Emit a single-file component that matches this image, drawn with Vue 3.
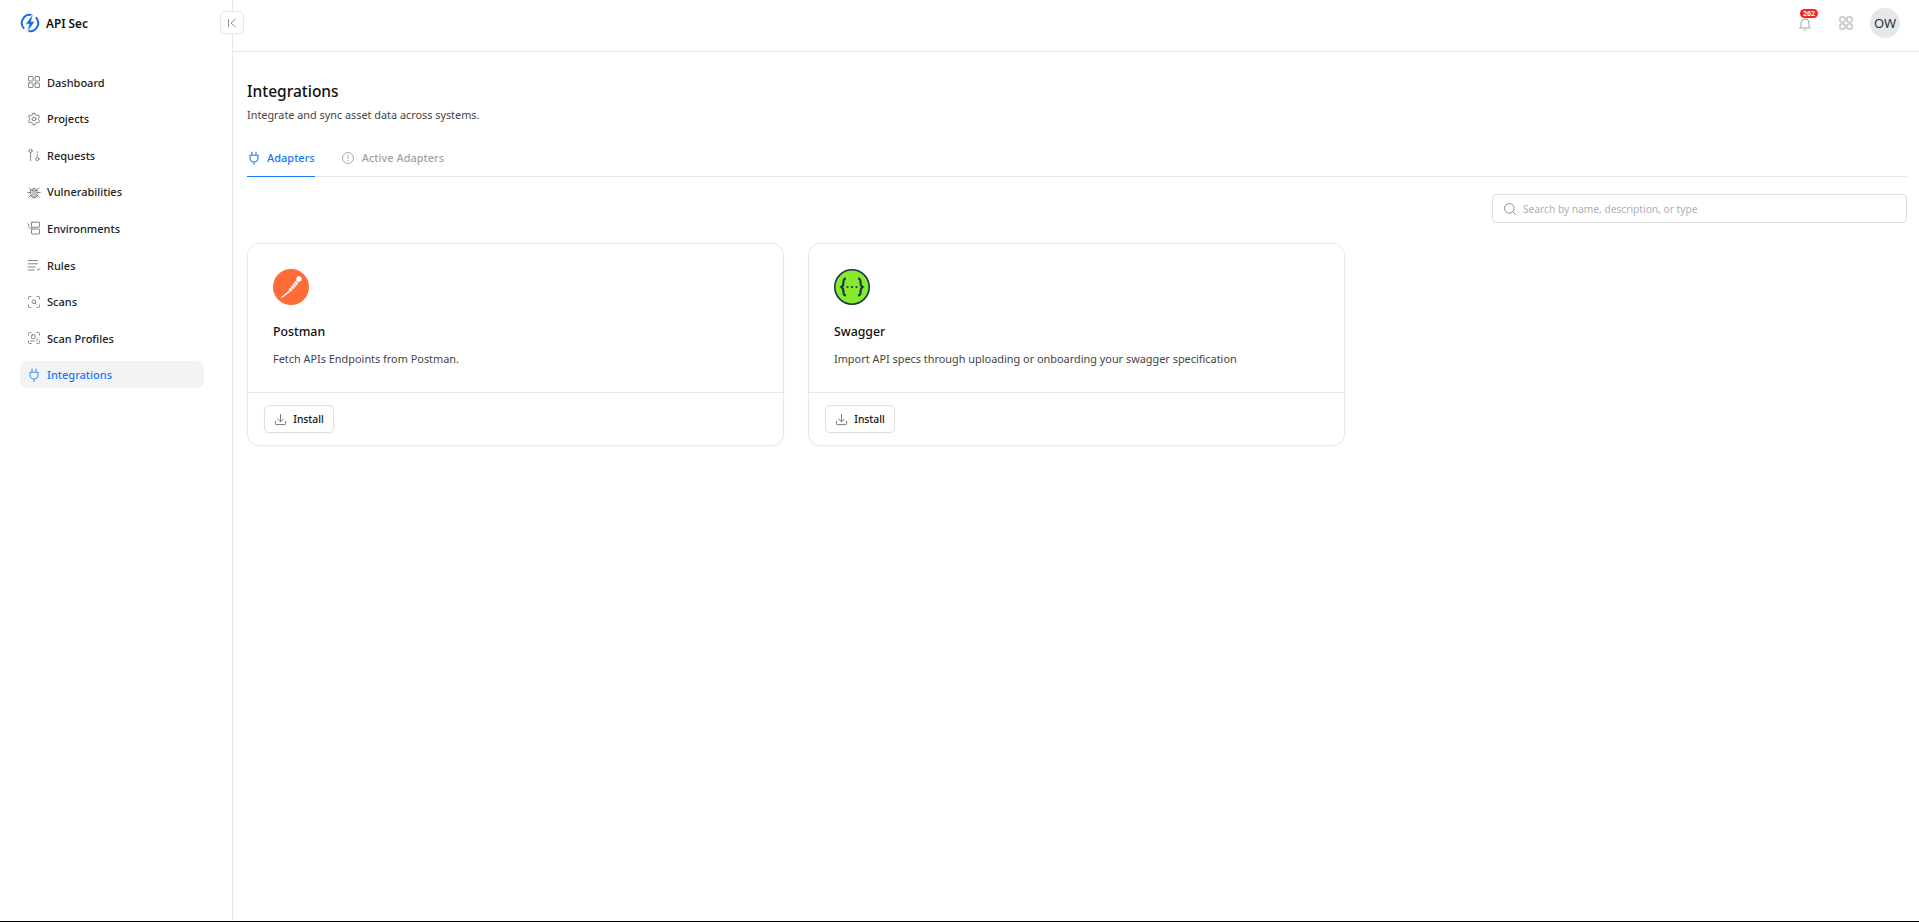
<script setup>
const nav = [
  { label: 'Dashboard', icon: 'grid' },
  { label: 'Projects', icon: 'gear' },
  { label: 'Requests', icon: 'req' },
  { label: 'Vulnerabilities', icon: 'bug' },
  { label: 'Environments', icon: 'env' },
  { label: 'Rules', icon: 'rules' },
  { label: 'Scans', icon: 'scan' },
  { label: 'Scan Profiles', icon: 'profile' },
  { label: 'Integrations', icon: 'plug', active: true }
]
const cards = [
  { name: 'Postman', logo: 'postman', desc: 'Fetch APIs Endpoints from Postman.' },
  { name: 'Swagger', logo: 'swagger', desc: 'Import API specs through uploading or onboarding your swagger specification' }
]
</script>

<template>
  <div class="shell">
    <aside class="side">
      <div class="brand">
        <svg class="brand-logo" viewBox="0 0 20 20" width="20" height="20">
          <path d="M11.500 1.950A8.200 8.200 0 0 0 4.200 15.800M8.500 18.050A8.200 8.200 0 0 0 15.800 4.200" fill="none" stroke="#1a6fe0" stroke-width="2"/>
          <path d="M13.400 .4 5.400 11.200h3.800l-2.400 8.400 8.200-11h-3.800z" fill="#1a6fe0" stroke="#fff" stroke-width=".6"/>
        </svg>
        <span>API Sec</span>
      </div>
      <nav class="nav">
        <a v-for="n in nav" :key="n.label" class="item" :class="{ active: n.active }">
          <svg class="ico" viewBox="0 0 14 14" width="14" height="14" fill="none" stroke="currentColor" stroke-width=".9" stroke-linecap="round" stroke-linejoin="round">
            <template v-if="n.icon === 'grid'">
              <rect x="1.500" y="1.500" width="4.500" height="4.500" rx=".5"/><rect x="8" y="1.500" width="4.500" height="4.500" rx=".5"/>
              <rect x="1.500" y="8" width="4.500" height="4.500" rx=".5"/><rect x="8" y="8" width="4.500" height="4.500" rx=".5"/>
            </template>
            <template v-else-if="n.icon === 'gear'">
              <path d="M6 1.200h2l.5 1.600 1.400.8 1.600-.4 1 1.800-1.100 1.200v1.600l1.100 1.200-1 1.800-1.600-.4-1.400.8-.5 1.600H6l-.5-1.600-1.400-.8-1.600.4-1-1.800 1.100-1.200V6.200L1.500 5l1-1.800 1.600.4 1.400-.8z"/>
              <circle cx="7" cy="7" r="1.900"/>
            </template>
            <template v-else-if="n.icon === 'req'">
              <circle cx="3.600" cy="2.800" r="1.600"/><path d="M3.600 4.400v8.300"/><circle cx="10.300" cy="10.900" r="1.700"/><path d="M10.300 8V6.800M10.300 4.800V3.600"/>
            </template>
            <template v-else-if="n.icon === 'bug'">
              <path d="M3.900 5.200h6.200v4.600a3.100 3.100 0 0 1-6.200 0zM5 5.200a2 2 0 0 1 4 0M6 5.500v7M8 5.500v7M3.900 7.500H.8M10.100 7.500h3.100M4 10 1.500 12.500M10 10l2.500 2.500M4.300 5.300 2 2.800M9.700 5.300 12 2.800"/>
            </template>
            <template v-else-if="n.icon === 'env'">
              <rect x="4.500" y="1.200" width="8" height="5" rx=".5"/><rect x="4.500" y="8" width="8" height="5" rx=".5"/><path d="M.8 2.800 2.300 4.300.8 5.800M2.300 7H4.500"/>
            </template>
            <template v-else-if="n.icon === 'rules'">
              <path d="M1.200 2.500h9.500M1.200 5.800h9.500M1.200 9h7M1.200 12h6M10 11.200l1.200 1.200 1.700-2"/>
            </template>
            <template v-else-if="n.icon === 'scan'">
              <path d="M1.500 4V2.500a1 1 0 0 1 1-1H4M10 1.500h1.500a1 1 0 0 1 1 1V4M12.500 10v1.500a1 1 0 0 1-1 1H10M4 12.500H2.500a1 1 0 0 1-1-1V10"/>
              <circle cx="6.800" cy="6.800" r="1.800"/><path d="M8.200 8.200l1 1"/>
            </template>
            <template v-else-if="n.icon === 'profile'">
              <path d="M1.500 4V2.500a1 1 0 0 1 1-1H4M10 1.500h1.500a1 1 0 0 1 1 1V4M12.500 10v1.500a1 1 0 0 1-1 1H10M4 12.500H2.500a1 1 0 0 1-1-1V10"/>
              <rect x="4.300" y="3.800" width="3.800" height="3.800" rx="1"/><path d="M3.500 10h3.500M10 8v2"/>
            </template>
            <template v-else>
              <path d="M5 1v3M9 1v3M3 4.200h8V7a4 4 0 0 1-8 0zM7 11v2.500" stroke-width="1.100"/>
            </template>
          </svg>
          <span>{{ n.label }}</span>
        </a>
      </nav>
    </aside>
    <div class="collapse">
      <svg viewBox="0 0 12 12" width="12" height="12" fill="none" stroke="#8c8c8c" stroke-width="1">
        <path d="M2.500 2v8M9.500 2 5 6l4.500 4"/>
      </svg>
    </div>
    <div class="main">
      <header class="top">
        <div class="bell">
          <svg viewBox="0 0 14 14" width="14" height="14" fill="none" stroke="#9a9a9a" stroke-width=".9">
            <path d="M3 9.500V6a4 4 0 0 1 8 0v3.500l1.500 1.500h-11zM5.800 13h2.400"/>
          </svg>
          <span class="badge">262</span>
        </div>
        <svg class="apps" viewBox="0 0 14 14" width="14" height="14" fill="none" stroke="#a3a3a3" stroke-width="1">
          <rect x="1" y="1" width="5" height="5" rx=".7"/><rect x="8" y="1" width="5" height="5" rx=".7"/>
          <rect x="1" y="8" width="5" height="5" rx=".7"/><rect x="8" y="8" width="5" height="5" rx=".7"/>
        </svg>
        <div class="avatar">OW</div>
      </header>
      <main class="content">
        <h1>Integrations</h1>
        <p class="sub">Integrate and sync asset data across systems.</p>
        <div class="tabs">
          <div class="tab on">
            <svg viewBox="0 0 14 14" width="14" height="14" fill="none" stroke="currentColor" stroke-width="1.100" stroke-linecap="round">
              <path d="M5 1v3M9 1v3M3 4.200h8V7a4 4 0 0 1-8 0zM7 11v2.500"/>
            </svg>
            <span>Adapters</span>
          </div>
          <div class="tab second">
            <svg viewBox="0 0 14 14" width="14" height="14" fill="none" stroke="currentColor" stroke-width=".9" stroke-linecap="round">
              <circle cx="7" cy="7" r="5.500"/><path d="M7 4v3.500M7 9.600v.2"/>
            </svg>
            <span>Active Adapters</span>
          </div>
        </div>
        <div class="tools">
          <div class="search">
            <svg viewBox="0 0 14 14" width="14" height="14" fill="none" stroke="#8f8f8f" stroke-width="1">
              <circle cx="6.300" cy="6.300" r="4.800"/><path d="M9.800 9.800l3 3"/>
            </svg>
            <span>Search by name, description, or type</span>
          </div>
        </div>
        <div class="cards">
          <section v-for="c in cards" :key="c.name" class="card">
            <div class="body">
              <svg v-if="c.logo === 'postman'" class="logo" viewBox="0 0 36 36" width="36" height="36">
                <circle cx="18" cy="18" r="18" fill="#ff6c37"/>
                <path d="M23.500 11 15.500 20.800l2.500 2L26 13.500z" fill="#fff"/>
                <circle cx="26" cy="10" r="2.700" fill="#fff"/>
                <path d="M23 12.200l2.500 2" stroke="#ff6c37" stroke-width=".8"/>
                <path d="M20.500 14.300l2.800 2.200M18.800 16.300l2.800 2.200M17.200 18.300l2.800 2.200" stroke="#ff6c37" stroke-width=".8"/>
                <path d="M16 21.500 8 28.300l1 .8 8-6.200z" fill="#fff"/>
              </svg>
              <svg v-else class="logo" viewBox="0 0 36 36" width="36" height="36">
                <circle cx="18" cy="18" r="17.200" fill="#85ea2d" stroke="#173646" stroke-width="1.600"/>
                <path d="M12 9.500c-2.500 0-2.500 1.500-2.500 3.500s.2 3.500-2 5c2.200 1.500 2 3 2 5s0 3.500 2.500 3.500M24 9.500c2.500 0 2.500 1.500 2.500 3.500s-.2 3.500 2 5c-2.200 1.500-2 3-2 5s0 3.500-2.500 3.500" fill="none" stroke="#173646" stroke-width="2.200"/>
                <circle cx="13.500" cy="18" r="1.100" fill="#173646"/><circle cx="18" cy="18" r="1.100" fill="#173646"/><circle cx="22.500" cy="18" r="1.100" fill="#173646"/>
              </svg>
              <h2>{{ c.name }}</h2>
              <p>{{ c.desc }}</p>
            </div>
            <div class="foot">
              <button class="btn">
                <svg viewBox="0 0 14 14" width="13" height="13" fill="none" stroke="#666" stroke-width=".95" stroke-linecap="round" stroke-linejoin="round">
                  <path d="M7 1.500v7.500M4 6.500 7 9.500l3-3M1.500 9v2.500a1 1 0 0 0 1 1h9a1 1 0 0 0 1-1V9"/>
                </svg>
                <span>Install</span>
              </button>
            </div>
          </section>
        </div>
      </main>
    </div>
  </div>
</template>

<style>
html, body { margin: 0; background: #000; }
</style>

<style scoped>
.shell { display: flex; height: 921px; background: #fff; position: relative; overflow: hidden; font-family: "Noto Sans", "Open Sans", sans-serif; color: #1f1f1f; }
.side { width: 232px; flex: none; border-right: 1px solid #e8e8e8; box-sizing: content-box; }
.brand { display: flex; align-items: center; gap: 6px; height: 46px; padding-left: 20px; font-size: 11.800px; font-weight: 600; color: #111; }
.nav { display: flex; flex-direction: column; gap: 9.600px; padding: 22.600px 28px 0 20px; }
.item { display: flex; align-items: center; gap: 6px; height: 27px; padding-left: 7px; border-radius: 8px; font-size: 11px; font-weight: 500; color: #222; }
.ico { color: #777; flex: none; }
.item.active { background: #f2f3f5; color: #1677ff; }
.item.active .ico { color: #4096ff; }
.collapse { position: absolute; left: 220px; top: 11px; width: 24px; height: 23px; box-sizing: border-box; border: 1px solid #e8e8e8; border-radius: 5px; background: #fff; display: flex; align-items: center; justify-content: center; box-shadow: 0 1px 2px rgba(0,0,0,.04); }
.main { flex: 1; min-width: 0; }
.top { height: 46px; border-bottom: 1px solid #e8e8e8; display: flex; align-items: center; justify-content: flex-end; padding: 0 19px 5px 0; }
.bell { position: relative; width: 14px; height: 14px; margin-right: 27px; margin-top: 2px; }
.bell svg { display: block; }
.badge { position: absolute; left: 2px; top: -8px; width: 18px; height: 9px; line-height: 9px; border-radius: 5px; background: #f5222d; color: #fff; font-size: 7px; font-weight: 700; text-align: center; }
.apps { margin-right: 17px; }
.avatar { width: 30px; height: 30px; border-radius: 50%; background: #e5e7eb; display: flex; align-items: center; justify-content: center; font-size: 13px; color: #2a3342; }
.content { padding: 0 12px 0 14px; }
h1 { margin: 28px 0 0; font-size: 15.500px; line-height: 22px; font-weight: 500; color: #111; }
.sub { margin: 4px 0 0; font-size: 10.850px; line-height: 18px; color: #444; }
.tabs { display: flex; gap: 26px; margin-top: 20px; border-bottom: 1px solid #e8e8e8; height: 32px; }
.tab { display: flex; align-items: center; gap: 6px; font-size: 11px; font-weight: 500; color: #a3a3a3; height: 32px; padding-bottom: 5px; box-sizing: border-box; }
.tab.second { gap: 7px; }
.tab.on { color: #1677ff; border-bottom: 1px solid #1677ff; height: 33px; }
.tools { display: flex; justify-content: flex-end; margin-top: 17px; }
.search { width: 415px; height: 29px; box-sizing: border-box; border: 1px solid #dedede; border-radius: 4px; display: flex; align-items: center; gap: 6px; padding-left: 10px; font-size: 10.200px; color: #b0b0b0; }
.cards { display: grid; grid-template-columns: repeat(3, 536.500px); gap: 24.500px; margin-top: 20px; }
.card { height: 203px; box-sizing: border-box; border: 1px solid #e8e8e8; border-radius: 12px; display: flex; flex-direction: column; box-shadow: 0 1px 2px rgba(0,0,0,.03); }
.body { flex: 1; padding: 25px 25px 0; }
.logo { display: block; }
h2 { margin: 18px 0 0; font-size: 12.300px; line-height: 18px; font-weight: 500; color: #111; }
.body p { margin: 9px 0 0; font-size: 10.900px; line-height: 18px; color: #444; }
.foot { height: 53px; box-sizing: border-box; border-top: 1px solid #e8e8e8; padding: 12px 16px; }
.btn { height: 28px; width: 70px; box-sizing: border-box; border: 1px solid #e0e0e0; border-radius: 5px; background: #fff; display: flex; align-items: center; justify-content: center; gap: 6px; font: 500 10.300px "Noto Sans", sans-serif; color: #111; padding: 0; box-shadow: 0 1px 2px rgba(0,0,0,.04); }
</style>
